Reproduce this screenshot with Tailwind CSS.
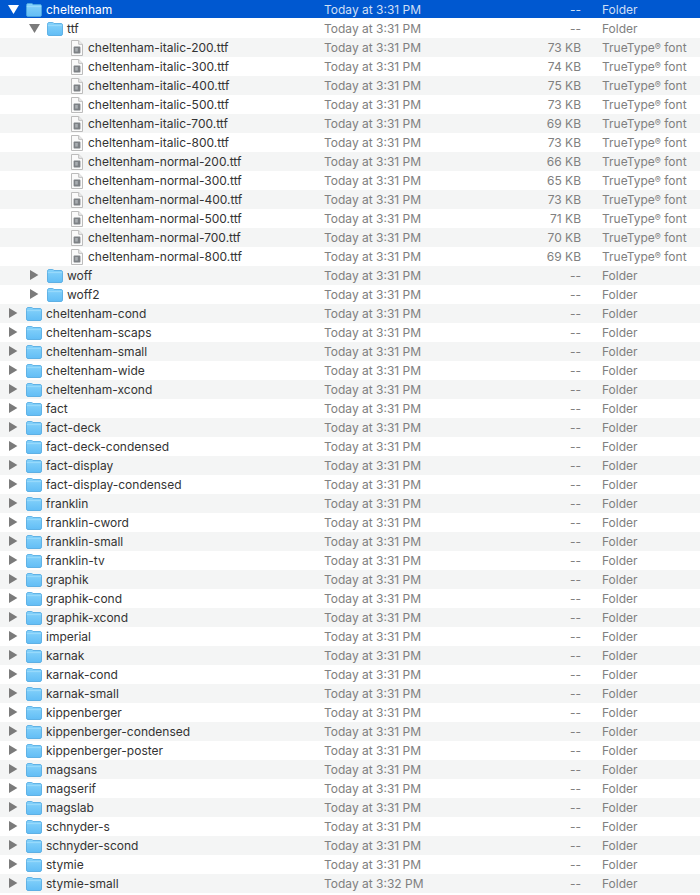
<!DOCTYPE html>
<html>
<head>
<meta charset="utf-8">
<script src="https://cdn.jsdelivr.net/npm/@tailwindcss/browser@4"></script>
</head>
<body class="bg-white overflow-hidden">
<svg width="0" height="0" class="absolute">
<defs>
<linearGradient id="fg" x1="0" y1="0" x2="0" y2="1"><stop offset="0" stop-color="#86d3fb"/><stop offset="1" stop-color="#62bdf5"/></linearGradient>
<symbol id="folder" viewBox="0 0 16 14">
<path d="M.5 2.2C.5 1.2 1.1.5 2 .5h3.6c.7 0 1 .5 1.5 1h6.9c1 0 1.5.6 1.5 1.5v8.9c0 .9-.6 1.6-1.5 1.6H2c-.9 0-1.5-.7-1.5-1.6z" fill="url(#fg)" stroke="#4aa6e0" stroke-width=".8"/>
<path d="M.8 3.6h14.4" stroke="#9adafb" stroke-width="1"/>
</symbol>
<symbol id="file" viewBox="0 0 12 16">
<path d="M.5.5h7.2l3.8 3.8v11.2H.5z" fill="#fafafa" stroke="#bcbcbc"/>
<path d="M7.7.5v3.8h3.8" fill="#eee" stroke="#bcbcbc"/>
<rect x="2.6" y="6.6" width="6.8" height="7" rx=".8" fill="#7d8185"/>
<rect x="4.2" y="8" width="2.6" height="3.6" fill="#a9adb1"/>
</symbol>
<symbol id="tri-r" viewBox="0 0 10 10"><path d="M1 0l8.4 5L1 10z"/></symbol>
<symbol id="tri-d" viewBox="0 0 11 9"><path d="M0 0h11L5.5 9z"/></symbol>
</defs>
</svg>
<main id="list" class="w-[700px] font-['Inter','Liberation_Sans',sans-serif] text-[12px]"></main>
<script>
const fontFiles = [["cheltenham-italic-200.ttf","73 KB"],["cheltenham-italic-300.ttf","74 KB"],["cheltenham-italic-400.ttf","75 KB"],["cheltenham-italic-500.ttf","73 KB"],["cheltenham-italic-700.ttf","69 KB"],["cheltenham-italic-800.ttf","73 KB"],["cheltenham-normal-200.ttf","66 KB"],["cheltenham-normal-300.ttf","65 KB"],["cheltenham-normal-400.ttf","73 KB"],["cheltenham-normal-500.ttf","71 KB"],["cheltenham-normal-700.ttf","70 KB"],["cheltenham-normal-800.ttf","69 KB"]];
const folders = "cheltenham-cond cheltenham-scaps cheltenham-small cheltenham-wide cheltenham-xcond fact fact-deck fact-deck-condensed fact-display fact-display-condensed franklin franklin-cword franklin-small franklin-tv graphik graphik-cond graphik-xcond imperial karnak karnak-cond karnak-small kippenberger kippenberger-condensed kippenberger-poster magsans magserif magslab schnyder-s schnyder-scond stymie stymie-small".split(" ");
const rows = [
  {n:"cheltenham",k:"folder",lvl:0,open:true,sel:true},
  {n:"ttf",k:"folder",lvl:1,open:true},
  ...fontFiles.map(f=>({n:f[0],s:f[1],k:"file",lvl:2})),
  {n:"woff",k:"folder",lvl:1},
  {n:"woff2",k:"folder",lvl:1},
  ...folders.map(n=>({n,k:"folder",lvl:0}))
];
const pad = ["w-[26px]","w-[47px]","w-[71px]"];
const html = rows.map((r,i)=>{
  const shade = r.sel ? "bg-[#0058d0] shadow-[inset_0_-1px_0_#fff]" : (i%2===0 ? "bg-[#f4f5f5]" : "bg-white");
  const nameC = r.sel ? "text-white" : "text-[#333333]";
  const metaC = r.sel ? "text-[#cfdff5]" : "text-[#808080]";
  const triC = r.sel ? "fill-white" : "fill-[#7b7b7b]";
  const triX = r.lvl===0 ? "left-[8px]" : "left-[29px]";
  const tri = r.k==="file" ? "" : r.open
    ? `<svg class="absolute ${triX} top-[5px] w-[11px] h-[9px] ${triC}"><use href="#tri-d"/></svg>`
    : `<svg class="absolute ${triX} top-[4px] w-[10px] h-[10px] ${triC}"><use href="#tri-r"/></svg>`;
  const icon = r.k==="file"
    ? `<svg class="w-[12px] h-[16px] shrink-0"><use href="#file"/></svg>`
    : `<svg class="w-[16px] h-[14px] shrink-0"><use href="#folder"/></svg>`;
  const gap = r.k==="file" ? "gap-[5px]" : "gap-[4px]";
  const date = r.n==="stymie-small" ? "Today at 3:32 PM" : "Today at 3:31 PM";
  const kind = r.k==="file" ? `TrueType<span class="text-[9px] align-[2px]">®</span> font` : "Folder";
  return `<div class="relative flex items-center h-[19px] ${shade}">
    ${tri}
    <div class="${pad[r.lvl]} shrink-0"></div>
    <div class="flex items-center ${gap} ${nameC}" style="width:${324-[26,47,71][r.lvl]}px">${icon}<span class="whitespace-nowrap">${r.n}</span></div>
    <div class="w-[180px] shrink-0 ${metaC}">${date}</div>
    <div class="w-[77px] shrink-0 text-right ${metaC}">${r.s||"--"}</div>
    <div class="ml-[21px] whitespace-nowrap ${metaC}">${kind}</div>
  </div>`;
}).join("");
document.getElementById("list").innerHTML = html;
</script>
</body>
</html>
